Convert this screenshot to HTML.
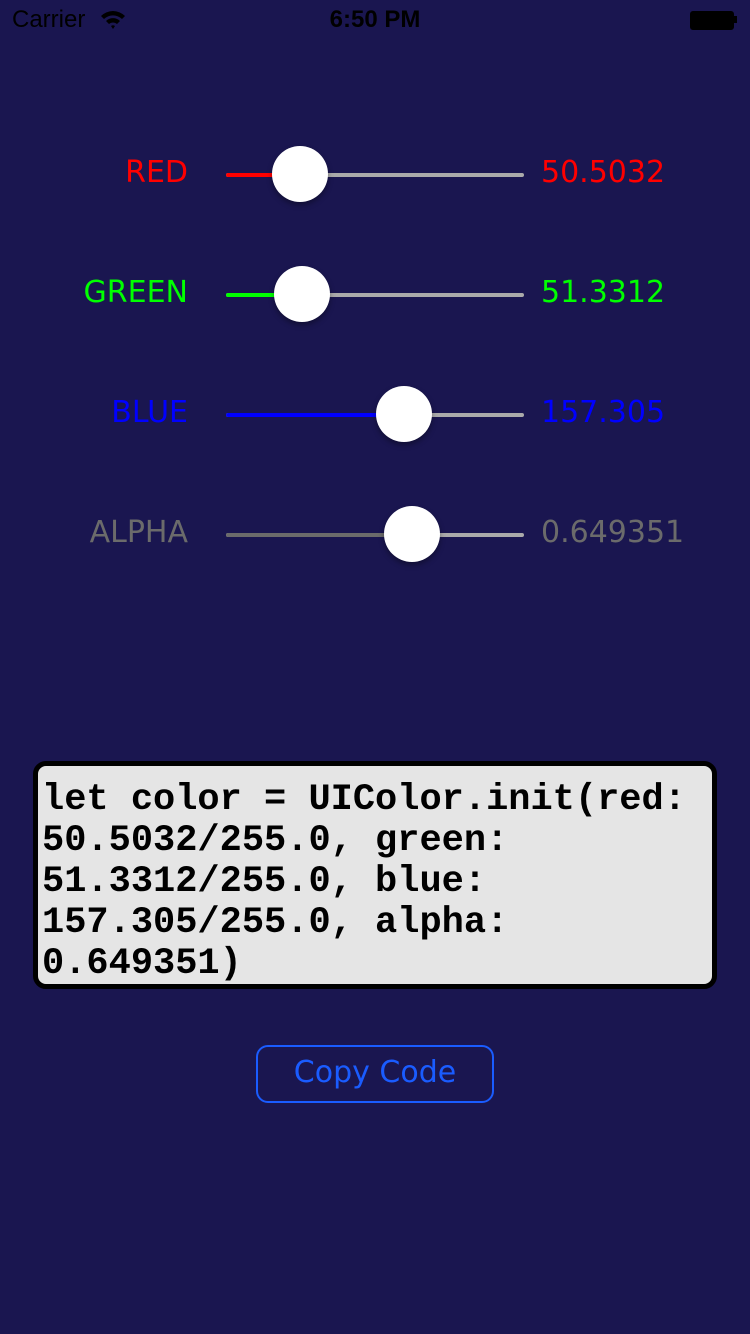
<!DOCTYPE html>
<html><head><meta charset="utf-8"><style>
body{margin:0;width:750px;height:1334px;background:#1a1650;position:relative;overflow:hidden;font-family:"DejaVu Sans","Liberation Sans",sans-serif}
.sb{position:absolute;top:6px;font-family:"Liberation Sans",sans-serif;font-size:24px;color:#000}
.lbl{position:absolute;width:188px;text-align:right;font-size:30px;left:0}
.val{position:absolute;left:541px;font-size:30px}
.tr{position:absolute;left:226px;width:298px;height:4px;background:#aaa;border-radius:2px}
.fill{position:absolute;left:0;top:0;height:4px;border-radius:2px}
.th{position:absolute;width:56px;height:56px;border-radius:50%;background:#fff;box-shadow:0 3px 6px rgba(0,0,0,.35)}
.box{position:absolute;left:33px;top:761px;width:674px;height:218px;border:5px solid #000;border-radius:13px;background:#e5e5e5;box-sizing:content-box}
.code{position:absolute;left:4px;top:14px;font-family:"Liberation Mono",monospace;font-weight:bold;font-size:37px;line-height:41px;color:#000;white-space:pre}
.btn{position:absolute;left:256px;top:1045px;width:234px;height:54px;border:2px solid #1a5cff;border-radius:12px;color:#1a5cff;font-size:30px;text-align:center;line-height:52px}
</style></head><body>
<div class="sb" style="left:12px">Carrier</div>
<svg style="position:absolute;left:100px;top:10px" width="26" height="20" viewBox="0 0 26 20"><path d="M1 6 A17 17 0 0 1 25 6 L22 9 A13 13 0 0 0 4 9Z M6 11 A10 10 0 0 1 20 11 L17 14 A6 6 0 0 0 9 14Z M11 16 L13 19 L15 16 A3 3 0 0 0 11 16Z" fill="#000"/></svg>
<div class="sb" style="left:0;width:750px;text-align:center;font-weight:bold">6:50 PM</div>
<div style="position:absolute;left:690px;top:11px;width:42px;height:17px;border:1px solid #000;border-radius:3px;background:#000"></div>
<div style="position:absolute;left:734px;top:16px;width:3px;height:7px;background:#000"></div>

<div class="lbl" style="top:155px;color:#ff0000">RED</div>
<div class="tr" style="top:173px"><div class="fill" style="width:74px;background:#ff0000"></div></div>
<div class="th" style="left:272px;top:146px"></div>
<div class="val" style="top:155px;color:#ff0000">50.5032</div>

<div class="lbl" style="top:275px;color:#00ff00">GREEN</div>
<div class="tr" style="top:293px"><div class="fill" style="width:76px;background:#00ff00"></div></div>
<div class="th" style="left:274px;top:266px"></div>
<div class="val" style="top:275px;color:#00ff00">51.3312</div>

<div class="lbl" style="top:395px;color:#0000ff">BLUE</div>
<div class="tr" style="top:413px"><div class="fill" style="width:178px;background:#0000ff"></div></div>
<div class="th" style="left:376px;top:386px"></div>
<div class="val" style="top:395px;color:#0000ff">157.305</div>

<div class="lbl" style="top:515px;color:#6b6b6b">ALPHA</div>
<div class="tr" style="top:533px"><div class="fill" style="width:186px;background:#6b6b6b"></div></div>
<div class="th" style="left:384px;top:506px"></div>
<div class="val" style="top:515px;color:#6b6b6b">0.649351</div>

<div class="box"><div class="code">let color = UIColor.init(red:
50.5032/255.0, green:
51.3312/255.0, blue:
157.305/255.0, alpha:
0.649351)</div></div>
<div class="btn">Copy Code</div>
</body></html>
